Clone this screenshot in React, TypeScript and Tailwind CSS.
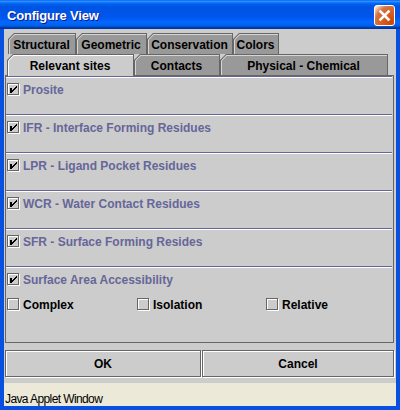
import React from "react";

const F = "font-['Liberation_Sans',Arial,sans-serif]";

function Tab({
  label,
  w,
  fill,
  hi,
  selected,
}: {
  label: string;
  w: string;
  fill: string;
  hi: string;
  selected?: boolean;
}) {
  return (
    <div
      className={`${w} ${selected ? "h-[22px] relative z-10" : "h-full"} shrink-0 bg-[#666666] pt-px pl-px pr-px [clip-path:polygon(6px_0,100%_0,100%_100%,0_100%,0_6px)]`}
    >
      <div
        className={`h-full ${hi} pt-px pl-px [clip-path:polygon(5.4px_0,100%_0,100%_100%,0_100%,0_5.4px)]`}
      >
        <div
          className={`h-full ${fill} flex items-center justify-center pr-[2px] text-[12px] font-bold text-black leading-none [clip-path:polygon(4.8px_0,100%_0,100%_100%,0_100%,0_4.8px)]`}
        >
          {label}
        </div>
      </div>
    </div>
  );
}

function Box({ checked }: { checked?: boolean }) {
  return (
    <div className="relative w-[13px] h-[13px] shrink-0">
      <div className="w-[12px] h-[12px] border border-[#666666] shadow-[inset_1px_1px_0_#ffffff,1px_1px_0_#ffffff]" />
      {checked && (
        <svg
          className="absolute left-0 top-0"
          width="13"
          height="13"
          viewBox="0 0 13 13"
          shapeRendering="crispEdges"
        >
          <path
            d="M3 5h2v5h-2z M9 3h1v2h-1z M8 4h1v2h-1z M7 5h1v2h-1z M6 6h1v2h-1z M5 7h1v2h-1z"
            fill="#000000"
          />
        </svg>
      )}
    </div>
  );
}

function Check({
  label,
  checked,
  color,
}: {
  label: string;
  checked?: boolean;
  color: string;
}) {
  return (
    <div className="flex items-center gap-[3px] h-[13px]">
      <Box checked={checked} />
      <span className={`mt-px text-[12px] font-bold leading-none whitespace-nowrap ${color}`}>
        {label}
      </span>
    </div>
  );
}

function Group({ label }: { label: string }) {
  return (
    <div className="h-[38px] shrink-0 border-t border-[#666699] shadow-[inset_0_1px_0_#ffffff] pt-[6px] pl-px">
      <Check label={label} checked color="text-[#666699]" />
    </div>
  );
}

export default function App() {
  return (
    <div className={`w-[400px] h-[410px] bg-[#0850e0] flex flex-col ${F}`}>
      {/* Title bar */}
      <div className="h-[29px] shrink-0 flex items-center justify-between pl-[7px] pr-[5px] bg-[linear-gradient(180deg,#0058ee_0%,#3593ff_4%,#288eff_6%,#127dff_8%,#036ffc_10%,#0262ee_14%,#0057e5_20%,#0054e3_24%,#0055eb_56%,#005bf5_66%,#026afe_76%,#0062ef_86%,#0052d6_92%,#0040ab_94%,#003092_100%)]">
        <span className="mt-[3px] text-[13px] font-bold text-white tracking-[-0.2px] [text-shadow:1px_1px_0_#0a1a8c]">
          Configure View
        </span>
        <div className="mt-[2px] w-[21px] h-[21px] rounded-[3px] border border-white bg-[radial-gradient(circle_at_90%_90%,#cc4600_0%,#dc6527_55%,#cd7546_70%,#ffccb2_90%,#ffffff_100%)] flex items-center justify-center">
          <svg width="13" height="13" viewBox="0 0 13 13">
            <path d="M2.5 2.5L10.5 10.5M10.5 2.5L2.5 10.5" stroke="#ffffff" strokeWidth="2.6" strokeLinecap="square" />
          </svg>
        </div>
      </div>

      {/* Body */}
      <div className="flex-1 flex flex-col px-[4px] pb-[4px]">
        <div className="h-[354px] shrink-0 bg-[#cccccc] flex flex-col pt-[4px]">
          {/* Tab row 1 */}
          <div className="h-[21px] shrink-0 flex ml-[4px]">
            <Tab label="Structural" w="w-[68px]" fill="bg-[#999999]" hi="bg-[#d6d6d6]" />
            <Tab label="Geometric" w="w-[71px]" fill="bg-[#999999]" hi="bg-[#d6d6d6]" />
            <Tab label="Conservation" w="w-[86px]" fill="bg-[#999999]" hi="bg-[#d6d6d6]" />
            <Tab label="Colors" w="w-[46px]" fill="bg-[#999999]" hi="bg-[#d6d6d6]" />
          </div>
          {/* Tab row 2 */}
          <div className="h-[21px] shrink-0 flex items-start ml-[3px]">
            <Tab label="Relevant sites" w="w-[127px]" fill="bg-[#cccccc]" hi="bg-[#ffffff]" selected />
            <Tab label="Contacts" w="w-[86px]" fill="bg-[#999999]" hi="bg-[#d6d6d6]" />
            <Tab label="Physical - Chemical" w="w-[168px]" fill="bg-[#999999]" hi="bg-[#d6d6d6]" />
          </div>
          {/* Panel */}
          <div className="ml-px w-[389px] h-[268px] shrink-0 border border-[#666666] flex flex-col pr-px">
            <Group label="Prosite" />
            <Group label="IFR - Interface Forming Residues" />
            <Group label="LPR - Ligand Pocket Residues" />
            <Group label="WCR - Water Contact Residues" />
            <Group label="SFR - Surface Forming Resides" />
            <div className="flex-1 border-t border-[#666699] shadow-[inset_0_1px_0_#ffffff] pt-[6px] pl-px">
              <Check label="Surface Area Accessibility" checked color="text-[#666699]" />
              <div className="mt-[12px] grid grid-cols-[130px_129px_1fr]">
                <Check label="Complex" color="text-black" />
                <Check label="Isolation" color="text-black" />
                <Check label="Relative" color="text-black" />
              </div>
            </div>
          </div>
          {/* Buttons */}
          <div className="mt-[7px] ml-px flex gap-px">
            <div className="w-[196px] h-[27px] border border-[#666666] shadow-[inset_1px_1px_0_#ffffff,1px_1px_0_#ffffff] flex items-center justify-center text-[12px] font-bold text-black">
              OK
            </div>
            <div className="w-[192px] h-[27px] border border-[#666666] shadow-[inset_1px_1px_0_#ffffff,1px_1px_0_#ffffff] flex items-center justify-center text-[12px] font-bold text-black">
              Cancel
            </div>
          </div>
        </div>
        {/* Status bar */}
        <div className="h-[23px] shrink-0 bg-[#ece9d8] pl-px pt-[10px] text-[12px] leading-[12px] tracking-[-0.6px] text-black">
          Java Applet Window
        </div>
      </div>
    </div>
  );
}
